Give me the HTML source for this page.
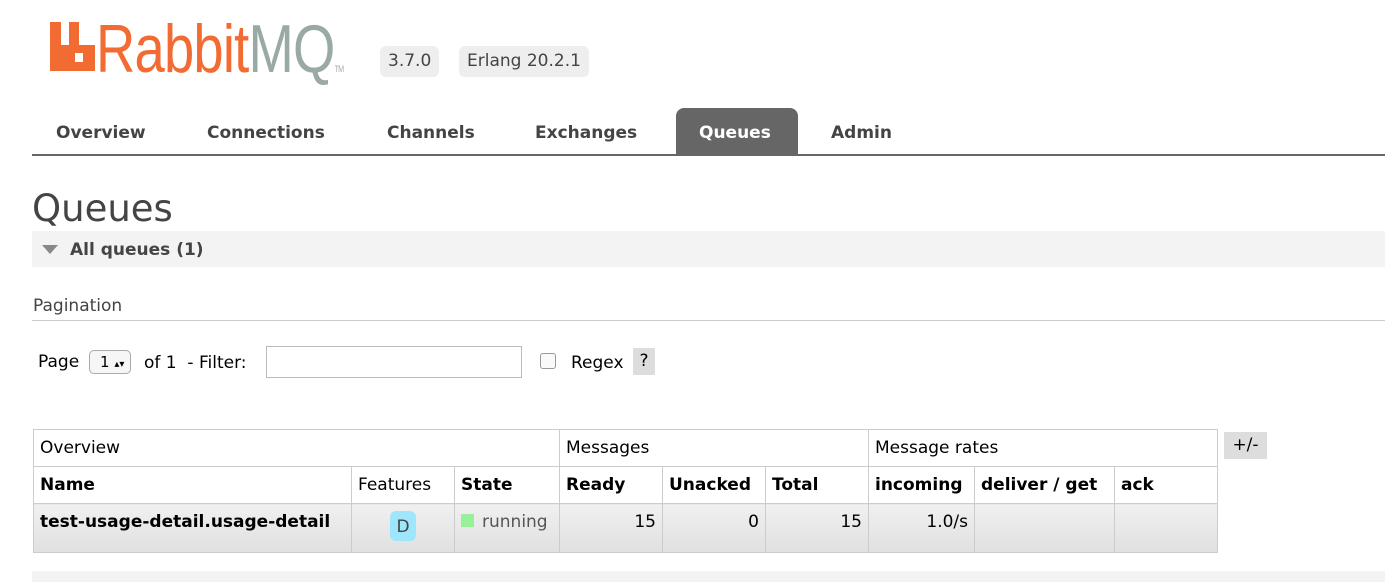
<!DOCTYPE html>
<html><head><style>
body{margin:0;width:1385px;height:582px;background:#fff;font-family:"DejaVu Sans",Verdana,sans-serif;color:#484848;position:relative;overflow:hidden}
.a{position:absolute;white-space:nowrap}
.badge{background:#eee;border-radius:6px;font-size:17px;color:#444;padding:0 8px;height:31px;line-height:31px}
.nav{font-size:17px;font-weight:bold;color:#444;top:123px}
table{position:absolute;left:33px;top:429px;border-collapse:collapse;font-size:17px}
td{border:1px solid #ccc;padding:0 6px;height:36px;color:#000;white-space:nowrap}
.b{font-weight:bold}
.r td{background:linear-gradient(#f0f0f0,#e0e0e0);height:40px;vertical-align:top;padding-top:8px}
.n{text-align:right}
</style></head><body>
<svg class="a" style="left:50px;top:22px" width="45" height="49"><path d="M0 0h11v23h8V0h10v23h16v26H0z" fill="#f26b32"/><rect x="25" y="31" width="8" height="9" fill="#fff"/></svg>
<div class="a" style="left:96px;top:10px;font-family:'Liberation Sans',sans-serif;font-size:68px;transform:scaleX(0.8);transform-origin:left;letter-spacing:-1px"><span style="color:#f26b32">Rabbit</span><span style="color:#99aaa5">MQ</span><span style="font-size:9px;color:#aaa">TM</span></div>
<div class="a badge" style="left:380px;top:46px">3.7.0</div>
<div class="a badge" style="left:459px;top:46px">Erlang 20.2.1</div>
<div class="a" style="left:676px;top:108px;width:122px;height:47px;background:#666;border-radius:8px 8px 0 0"></div>
<div class="a nav" style="left:56px">Overview</div>
<div class="a nav" style="left:207px">Connections</div>
<div class="a nav" style="left:387px">Channels</div>
<div class="a nav" style="left:535px">Exchanges</div>
<div class="a nav" style="left:699px;color:#fff">Queues</div>
<div class="a nav" style="left:831px">Admin</div>
<div class="a" style="left:32px;top:154px;width:1353px;height:2px;background:#666"></div>
<div class="a" style="left:32px;top:187px;font-size:37px;color:#444">Queues</div>
<div class="a" style="left:32px;top:231px;width:1353px;height:36px;background:#f3f3f3"></div>
<div class="a" style="left:42px;top:245px;width:0;height:0;border-left:8px solid transparent;border-right:8px solid transparent;border-top:9px solid #888"></div>
<div class="a" style="left:70px;top:240px;font-size:17px;font-weight:bold;color:#444">All queues (1)</div>
<div class="a" style="left:33px;top:296px;font-size:17px;color:#444">Pagination</div>
<div class="a" style="left:32px;top:320px;width:1353px;height:1px;background:#ccc"></div>
<div class="a" style="left:38px;top:352px;font-size:17px;color:#000">Page</div>
<div class="a" style="left:89px;top:350px;border:1px solid #aaa;border-radius:5px;background:#f6f6f6;font-size:15px;color:#000;line-height:22px;padding-left:10px;box-sizing:border-box;width:42px;height:24px">1 <span style="font-size:10px">▴▾</span></div>
<div class="a" style="left:144px;top:353px;font-size:17px;color:#000">of 1 &nbsp;- Filter:</div>
<div class="a" style="left:266px;top:346px;width:256px;height:32px;border:1px solid #bbb;box-sizing:border-box"></div>
<div class="a" style="left:540px;top:353px;width:14px;height:14px;border:1px solid #999;border-radius:3px;background:#fafafa"></div>
<div class="a" style="left:571px;top:353px;font-size:17px;color:#000">Regex</div>
<div class="a" style="left:633px;top:348px;width:22px;height:27px;background:#ddd;font-size:17px;color:#000;text-align:center;line-height:27px">?</div>
<table>
<tr><td colspan="3" style="width:512px">Overview</td><td colspan="3">Messages</td><td colspan="3">Message rates</td></tr>
<tr class="b"><td class="b" style="width:305px">Name</td><td style="font-weight:normal;width:90px">Features</td><td style="width:92px">State</td><td style="width:90px">Ready</td><td style="width:90px">Unacked</td><td style="width:90px">Total</td><td style="width:93px">incoming</td><td style="width:127px">deliver / get</td><td style="width:90px">ack</td></tr>
<tr class="r"><td class="b">test-usage-detail.usage-detail</td><td style="text-align:center;padding-top:7px"><span style="display:inline-block;background:#9ee6fb;border-radius:6px;width:26px;height:30px;line-height:32px;color:#444">D</span></td><td style="color:#555"><span style="display:inline-block;width:13px;height:13px;background:#98f098;margin-right:8px"></span>running</td><td class="n">15</td><td class="n">0</td><td class="n">15</td><td class="n">1.0/s</td><td></td><td></td></tr>
</table>
<div class="a" style="left:1224px;top:432px;width:43px;height:27px;background:#ddd;font-size:17px;color:#000;text-align:center;line-height:27px">+/-</div>
<div class="a" style="left:32px;top:571px;width:1353px;height:11px;background:#f3f3f3"></div>
</body></html>
